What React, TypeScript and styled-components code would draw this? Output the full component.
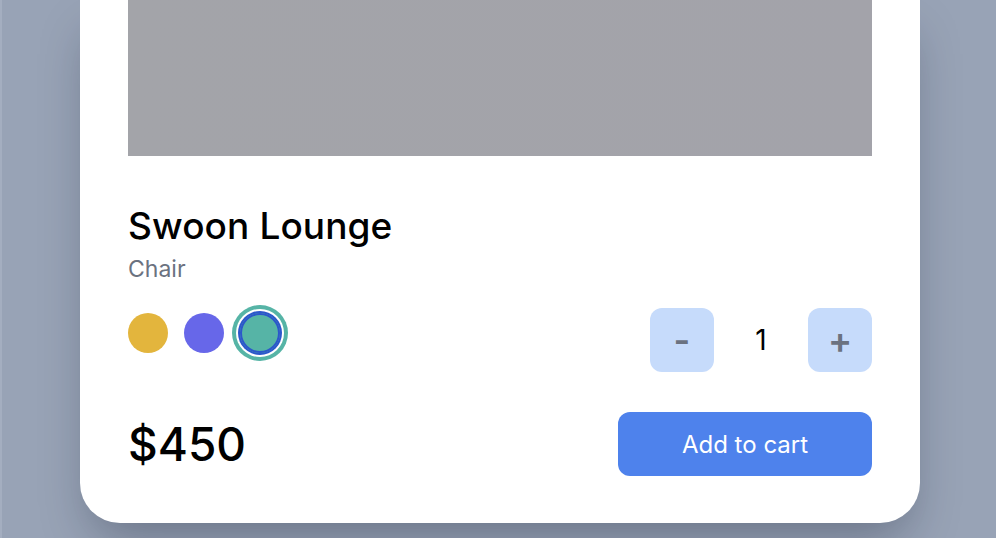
import React, { useState } from 'react';
import styled, { createGlobalStyle } from 'styled-components';

const GlobalStyle = createGlobalStyle`
	html, body {
		margin: 0;
		padding: 0;
		height: 538px;
		overflow: hidden;
		background: #98a3b6;
		font-family: Inter, "Noto Sans", sans-serif;
	}
	body {
		border-left: 2px solid #a4aec0;
		box-sizing: border-box;
	}
`;

const Page = styled.div`
	display: flex;
	padding-left: 78px;
`;

const Card = styled.div`
	width: 840px;
	box-sizing: border-box;
	padding: 0 48px 47px;
	background: #fff;
	border-radius: 0 0 40px 40px;
	box-shadow: 0 25px 50px -12px rgba(15, 23, 42, 0.35);
`;

const Picture = styled.div`
	height: 156px;
	background: linear-gradient(90deg, #a3a4a9, #a3a3aa);
`;

const Title = styled.h1`
	margin: 50px 0 0;
	font-size: 37px;
	line-height: 40px;
	font-weight: 500;
	letter-spacing: 0.1px;
	color: #000;
`;

const Kind = styled.div`
	margin-top: 7px;
	font-size: 23px;
	line-height: 32px;
	color: #6b7280;
`;

const OptionsRow = styled.div`
	display: flex;
	justify-content: space-between;
	align-items: flex-start;
	margin-top: 23px;
`;

const Swatches = styled.div`
	display: flex;
	gap: 16px;
	padding-top: 5px;
`;

const Swatch = styled.button<{ $color: string; $active?: boolean }>`
	width: 40px;
	height: 40px;
	border: none;
	padding: 0;
	border-radius: 50%;
	background: ${p => p.$color};
	cursor: pointer;
	box-shadow: ${p =>
		p.$active
			? `inset 0 0 0 2px #2c57cb, 0 0 0 2px #2c57cb, 0 0 0 4px #fff, 0 0 0 8px #56b4a6`
			: 'none'};
`;

const Quantity = styled.div`
	display: flex;
	align-items: center;
`;

const QtyButton = styled.button`
	width: 64px;
	height: 64px;
	border: none;
	border-radius: 12px;
	background: #c6dbfb;
	color: #6b7280;
	font-family: inherit;
	font-size: 36px;
	font-weight: 600;
	line-height: 1;
	cursor: pointer;
`;

const Count = styled.span`
	width: 94px;
	text-align: center;
	font-size: 28px;
	color: #000;
`;

const BuyRow = styled.div`
	display: flex;
	justify-content: space-between;
	align-items: center;
	margin-top: 40px;
`;

const Price = styled.div`
	font-size: 46px;
	font-weight: 500;
	line-height: 1;
	color: #000;
`;

const CartButton = styled.button`
	width: 254px;
	height: 64px;
	border: none;
	border-radius: 12px;
	background: #4e82ec;
	color: #fff;
	font-family: inherit;
	font-size: 24px;
	cursor: pointer;
`;

const colors = ['#e3b53d', '#6767e9', '#56b4a6'];

export default function App() {
	const [selected, setSelected] = useState(2);
	const [qty, setQty] = useState(1);

	return (
		<Page>
			<GlobalStyle />
			<Card>
				<Picture />
				<Title>Swoon Lounge</Title>
				<Kind>Chair</Kind>
				<OptionsRow>
					<Swatches>
						{colors.map((c, i) => (
							<Swatch
								key={c}
								$color={c}
								$active={i === selected}
								onClick={() => setSelected(i)}
							/>
						))}
					</Swatches>
					<Quantity>
						<QtyButton onClick={() => setQty(Math.max(1, qty - 1))}>-</QtyButton>
						<Count>{qty}</Count>
						<QtyButton onClick={() => setQty(qty + 1)}>+</QtyButton>
					</Quantity>
				</OptionsRow>
				<BuyRow>
					<Price>$450</Price>
					<CartButton>Add to cart</CartButton>
				</BuyRow>
			</Card>
		</Page>
	);
}
